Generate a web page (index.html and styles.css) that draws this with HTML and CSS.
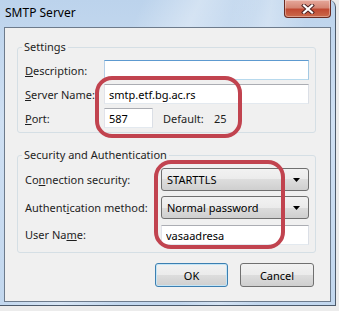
FILE: index.html
```html
<!DOCTYPE html>
<html lang="en">
<head>
    <meta charset="UTF-8">
    <title>SMTP Server</title>
    <link rel="stylesheet" href="styles.css">
</head>
<body>
    <div class="window">
        <div class="titlebar">
            <span class="title">SMTP Server</span>
            <div class="close">
                <svg width="14" height="10" viewBox="0 0 14 10">
                    <path d="M3 1.5 L11 8.5 M11 1.5 L3 8.5" stroke="#4a2020" stroke-width="4" stroke-linecap="square"/>
                    <path d="M3 1.5 L11 8.5 M11 1.5 L3 8.5" stroke="#ffffff" stroke-width="2.2" stroke-linecap="square"/>
                </svg>
            </div>
        </div>

        <div class="client">
            <fieldset class="group">
                <legend>Settings</legend>
                <div class="rows settings">
                    <label class="lbl"><u>D</u>escription:</label>
                    <input type="text" class="text focused">

                    <label class="lbl"><u>S</u>erver Name:</label>
                    <input type="text" class="text" value="smtp.etf.bg.ac.rs">

                    <label class="lbl"><u>P</u>ort:</label>
                    <div class="portRow">
                        <input type="text" class="text port" value="587">
                        <span class="defLabel">Default:</span>
                        <span>25</span>
                    </div>
                </div>
            </fieldset>

            <fieldset class="group security">
                <legend>Security and Authentication</legend>
                <div class="rows auth">
                    <label class="lbl">Co<u>n</u>nection security:</label>
                    <div class="combo">
                        <span>STARTTLS</span>
                        <svg width="7" height="4" viewBox="0 0 7 4"><path d="M0 0 H7 L3.5 4 Z" fill="#000"/></svg>
                    </div>

                    <label class="lbl">Authent<u>i</u>cation method:</label>
                    <div class="combo">
                        <span>Normal password</span>
                        <svg width="7" height="4" viewBox="0 0 7 4"><path d="M0 0 H7 L3.5 4 Z" fill="#000"/></svg>
                    </div>

                    <label class="lbl">User Na<u>m</u>e:</label>
                    <input type="text" class="text" value="vasaadresa">
                </div>
            </fieldset>

            <div class="buttons">
                <button class="btn default">OK</button>
                <button class="btn cancel">Cancel</button>
            </div>
        </div>

        <!-- red annotation marks drawn over the dialog -->
        <div class="mark markServer"></div>
        <div class="mark markSecurity"></div>
    </div>
</body>
</html>
```

FILE: styles.css
```css
body {
    margin: 0;
    padding: 0;
    background-color: #ececec;
    font-family: "Noto Sans", "Open Sans", sans-serif;
    font-size: 11px;
    color: #1e1e1e;
}
.window {
    position: relative;
    width: 336px;
    height: 306px;
    box-sizing: border-box;
    border-right: 1px solid #4c5a6b;
    border-bottom: 1px solid #4c5a6b;
    border-radius: 0 7px 0 0;
    /* aero glass frame */
    background:
        linear-gradient(115deg, rgba(255,255,255,0) 30%, rgba(255,255,255,0.35) 42%, rgba(255,255,255,0) 55%),
        linear-gradient(100deg, rgba(255,255,255,0) 60%, rgba(255,255,255,0.3) 70%, rgba(255,255,255,0) 80%),
        linear-gradient(#bcd3ec, #cfe0f3 40%, #c2d7ee);
    display: flex;
    flex-direction: column;
}
.titlebar {
    height: 27px;
    display: flex;
    justify-content: space-between;
    align-items: flex-start;
}
.title {
    padding-left: 5px;
    margin-top: 6px;
    font-size: 12px;
    line-height: 14px;
    color: #000;
}
.close {
    width: 47px;
    height: 18px;
    box-sizing: border-box;
    margin-right: 4px;
    border: 1px solid #6a2b22;
    border-top: none;
    border-radius: 0 0 4px 4px;
    background: linear-gradient(#e6a99c 0%, #d58674 45%, #c14a33 55%, #cb6a4c 100%);
    box-shadow: inset 0 0 0 1px rgba(255,255,255,0.35);
    display: flex;
    justify-content: center;
    align-items: center;
}
.client {
    height: 275px;
    margin: 0 4px 3px 4px;
    box-sizing: border-box;
    border: 1px solid #6d7b8c;
    background-color: #f0f0f0;
    padding: 11px 14px 0 12px;
}
.group {
    margin: 0;
    padding: 5px 6px 4px 7px;
    border: 1px solid #d5dfe5;
    border-radius: 3px;
    min-width: 0;
}
.group legend {
    padding: 0 2px;
    margin-left: -3px;
    line-height: 16px;
}
.security {
    margin-top: 14px;
    padding-bottom: 7px;
}
.rows {
    display: grid;
    align-items: center;
}
.settings {
    grid-template-columns: 79px 205px;
    row-gap: 4px;
}
.auth {
    grid-template-columns: 136px 148px;
    row-gap: 5px;
}
.auth .text {
    margin-top: 1px;
}
.lbl {
    white-space: nowrap;
}
.text {
    height: 20px;
    box-sizing: border-box;
    margin: 0;
    padding: 0 4px;
    border: 1px solid;
    border-color: #abadb3 #dbdfe6 #e3e9ef #e2e3ea;
    background: #fff;
    font-family: inherit;
    font-size: 11px;
    color: #000;
    outline: none;
}
.focused {
    border-color: #5d9ad0 #a4c9e3 #b7d9ed #b5cfe7;
}
.portRow {
    display: flex;
    align-items: center;
}
.port {
    width: 49px;
}
.defLabel {
    margin-left: 10px;
    width: 51px;
}
.combo {
    height: 23px;
    box-sizing: border-box;
    border: 1px solid #707070;
    border-radius: 3px;
    background: linear-gradient(#f2f2f2 0%, #ebebeb 50%, #dddddd 50%, #cfcfcf 100%);
    display: flex;
    justify-content: space-between;
    align-items: center;
    padding: 0 8px 0 5px;
    color: #000;
}
.buttons {
    display: flex;
    justify-content: flex-end;
    gap: 12px;
    margin-top: 10px;
    padding-right: 2px;
}
.btn {
    height: 24px;
    box-sizing: border-box;
    border: 1px solid #707070;
    border-radius: 3px;
    background: linear-gradient(#f2f2f2 0%, #ebebeb 50%, #dddddd 50%, #cfcfcf 100%);
    font-family: inherit;
    font-size: 11px;
    color: #000;
    padding: 0;
}
.default {
    width: 73px;
    border-color: #3c7fb1;
    box-shadow: inset 0 0 0 1px #c4e5f6;
}
.cancel {
    width: 74px;
}
/* hand drawn red rectangles over the screenshot */
.mark {
    position: absolute;
    box-sizing: border-box;
    border: 4px solid #c1434f;
    border-radius: 17px;
}
.markServer {
    left: 95px;
    top: 76px;
    width: 147px;
    height: 62px;
}
.markSecurity {
    left: 154px;
    top: 160px;
    width: 131px;
    height: 89px;
}
```
